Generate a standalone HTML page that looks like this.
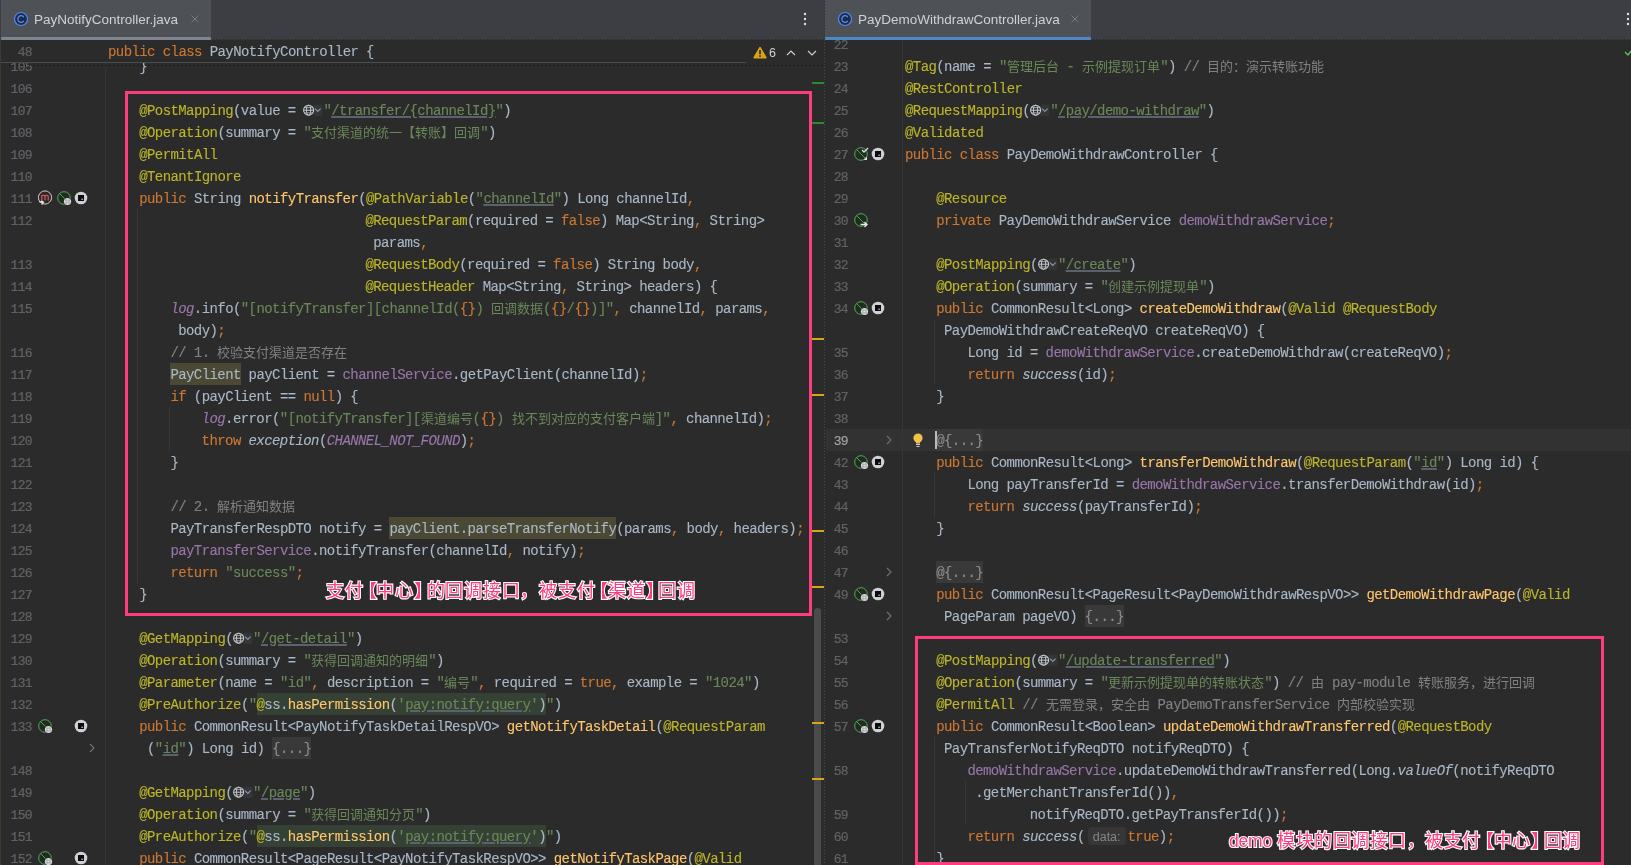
<!DOCTYPE html>
<html lang="zh-CN"><head><meta charset="utf-8"><style>*{margin:0;padding:0;box-sizing:border-box}
html,body{width:1631px;height:865px;overflow:hidden;background:#2b2b2b}
body{position:relative;font-family:"Liberation Mono",monospace}
.ln{position:absolute;width:60px;text-align:right;font-size:13px;letter-spacing:-0.65px;line-height:22px;color:#606366;-webkit-text-stroke-width:0.2px;white-space:pre;padding-top:1px}
.cl{position:absolute;font-size:14px;letter-spacing:-0.58px;-webkit-text-stroke:0.12px;line-height:22px;color:#a9b7c6;white-space:pre}
.cj{font-size:13px;letter-spacing:0;-webkit-text-stroke:0}
.k{color:#cc7832}.a{color:#bbb529}.s{color:#6a8759}.su{color:#6a8759;text-decoration:underline;text-decoration-color:#5a6270;text-decoration-thickness:1.5px;text-underline-offset:1px}
.c{color:#808080}.m{color:#ffc66d}.f{color:#9876aa}.fi{color:#9876aa;font-style:italic}.i{font-style:italic}
.hl{background:#4b4933;padding:4px 0 2px}
.inj{background:#364135;padding:4px 0 2px}
.fold{background:#393939;color:#8c8c8c;padding:4px 0 2px}
.hint{font-family:"Liberation Sans",sans-serif;font-size:12.5px;letter-spacing:0;-webkit-text-stroke:0;color:#858585;background:#363636;padding:3px 5px 1px;margin:0 2px 0 3px;border-radius:4px}
.gl{display:inline-block;width:20px;height:13px;vertical-align:-2px}
.gl svg{display:block}
.ic{position:absolute}
.gs{position:absolute;top:40px;width:1px;height:825px;background:#353535}
.ig{position:absolute;width:1px;background:#383838}
.tabbar{position:absolute;top:0;height:40px;background:#3d3e43;font-family:"Liberation Sans",sans-serif}
.tab{position:absolute;top:0;height:40px;background:#4e5156}
.tab .ul{position:absolute;left:0;right:0;bottom:0;height:3px;border-radius:1px}
.tab .t{position:absolute;top:12px;font-size:13.5px;color:#cfd1d4;white-space:pre}
.tab .x{position:absolute;top:11px;font-size:14px;color:#7f8286}
.box{position:absolute;border:3px solid #ff3c7e}
.ann{position:absolute;font-family:"Liberation Sans",sans-serif;font-weight:normal;color:#ff3c7e;font-size:18px;letter-spacing:0.75px;line-height:24px;white-space:pre;-webkit-text-stroke:2.2px #fff;paint-order:stroke fill}
.ann .bl{display:inline-block;width:12.5px;text-indent:-5px;overflow:visible}
.ann .br{display:inline-block;width:13px;text-indent:0.5px;overflow:visible}
</style></head>
<body><div id="root" style="position:absolute;left:0;top:0;width:1631px;height:865px;overflow:hidden;background:#2b2b2b;will-change:transform">
<div style="position:absolute;left:826px;top:429px;width:805px;height:22px;background:#323232"></div><div class="gs" style="left:105px"></div><div class="gs" style="left:902px"></div><div class="ig" style="left:137px;top:209px;height:374px"></div><div class="ig" style="left:169px;top:407px;height:44px"></div><div class="ig" style="left:934px;top:319px;height:66px"></div><div class="ig" style="left:934px;top:473px;height:44px"></div><div class="ig" style="left:934px;top:737px;height:132px"></div><div class="ig" style="left:965px;top:781px;height:44px"></div><div style="position:absolute;left:0;top:0;width:825px;height:865px;overflow:hidden">
<div class="ln" style="top:56px;left:-28px">105</div>
<div class="cl" style="top:56px;left:139.2px">}</div>
<div class="ln" style="top:78px;left:-28px">106</div>
<div class="ln" style="top:100px;left:-28px">107</div>
<div class="cl" style="top:100px;left:139.2px"><span class="a">@PostMapping</span>(value = <span class="gl"><svg width="20" height="13" viewBox="0 0 20 13"><rect x="10" y="0.5" width="9.5" height="11.5" rx="2" fill="#343537"/><circle cx="5.6" cy="6.2" r="5" fill="none" stroke="#c6c9cd" stroke-width="1.1"/><ellipse cx="5.6" cy="6.2" rx="2.1" ry="5" fill="none" stroke="#c6c9cd" stroke-width="1"/><line x1="0.8" y1="6.2" x2="10.4" y2="6.2" stroke="#c6c9cd" stroke-width="1"/><line x1="1.6" y1="3.6" x2="9.6" y2="3.6" stroke="#c6c9cd" stroke-width="0.7"/><line x1="1.6" y1="8.8" x2="9.6" y2="8.8" stroke="#c6c9cd" stroke-width="0.7"/><path d="M12 4.6 L14.8 7.4 L17.6 4.6" fill="none" stroke="#8d9aab" stroke-width="1.1"/></svg></span><span class="s">"</span><span class="su">/transfer/{channelId}</span><span class="s">"</span>)</div>
<div class="ln" style="top:122px;left:-28px">108</div>
<div class="cl" style="top:122px;left:139.2px"><span class="a">@Operation</span>(summary = <span class="s">"<span class="cj">支付渠道的统一【转账】回调</span>"</span>)</div>
<div class="ln" style="top:144px;left:-28px">109</div>
<div class="cl" style="top:144px;left:139.2px"><span class="a">@PermitAll</span></div>
<div class="ln" style="top:166px;left:-28px">110</div>
<div class="cl" style="top:166px;left:139.2px"><span class="a">@TenantIgnore</span></div>
<div class="ln" style="top:188px;left:-28px">111</div>
<div class="cl" style="top:188px;left:139.2px"><span class="k">public</span> String <span class="m">notifyTransfer</span>(<span class="a">@PathVariable</span>(<span class="s">"</span><span class="su">channelId</span><span class="s">"</span>) Long channelId<span class="k">,</span></div>
<div class="ln" style="top:210px;left:-28px">112</div>
<div class="cl" style="top:210px;left:365.4px"><span class="a">@RequestParam</span>(required = <span class="k">false</span>) Map&lt;String<span class="k">,</span> String&gt;</div>
<div class="cl" style="top:232px;left:373.2px">params<span class="k">,</span></div>
<div class="ln" style="top:254px;left:-28px">113</div>
<div class="cl" style="top:254px;left:365.4px"><span class="a">@RequestBody</span>(required = <span class="k">false</span>) String body<span class="k">,</span></div>
<div class="ln" style="top:276px;left:-28px">114</div>
<div class="cl" style="top:276px;left:365.4px"><span class="a">@RequestHeader</span> Map&lt;String<span class="k">,</span> String&gt; headers) {</div>
<div class="ln" style="top:298px;left:-28px">115</div>
<div class="cl" style="top:298px;left:170.4px"><span class="fi">log</span>.info(<span class="s">"[notifyTransfer][channelId(</span><span class="k">{}</span><span class="s">) <span class="cj">回调数据</span>(</span><span class="k">{}</span><span class="s">/</span><span class="k">{}</span><span class="s">)]"</span><span class="k">,</span> channelId<span class="k">,</span> params<span class="k">,</span></div>
<div class="cl" style="top:320px;left:178.2px">body)<span class="k">;</span></div>
<div class="ln" style="top:342px;left:-28px">116</div>
<div class="cl" style="top:342px;left:170.4px"><span class="c">// 1. <span class="cj">校验支付渠道是否存在</span></span></div>
<div class="ln" style="top:364px;left:-28px">117</div>
<div class="cl" style="top:364px;left:170.4px"><span class="hl">PayClient</span> payClient = <span class="f">channelService</span>.getPayClient(channelId)<span class="k">;</span></div>
<div class="ln" style="top:386px;left:-28px">118</div>
<div class="cl" style="top:386px;left:170.4px"><span class="k">if</span> (payClient == <span class="k">null</span>) {</div>
<div class="ln" style="top:408px;left:-28px">119</div>
<div class="cl" style="top:408px;left:201.6px"><span class="fi">log</span>.error(<span class="s">"[notifyTransfer][<span class="cj">渠道编号</span>(</span><span class="k">{}</span><span class="s">) <span class="cj">找不到对应的支付客户端</span>]"</span><span class="k">,</span> channelId)<span class="k">;</span></div>
<div class="ln" style="top:430px;left:-28px">120</div>
<div class="cl" style="top:430px;left:201.6px"><span class="k">throw</span> <span class="i">exception</span>(<span class="fi">CHANNEL_NOT_FOUND</span>)<span class="k">;</span></div>
<div class="ln" style="top:452px;left:-28px">121</div>
<div class="cl" style="top:452px;left:170.4px">}</div>
<div class="ln" style="top:474px;left:-28px">122</div>
<div class="ln" style="top:496px;left:-28px">123</div>
<div class="cl" style="top:496px;left:170.4px"><span class="c">// 2. <span class="cj">解析通知数据</span></span></div>
<div class="ln" style="top:518px;left:-28px">124</div>
<div class="cl" style="top:518px;left:170.4px">PayTransferRespDTO notify = <span class="hl">payClient.parseTransferNotify</span>(params<span class="k">,</span> body<span class="k">,</span> headers)<span class="k">;</span></div>
<div class="ln" style="top:540px;left:-28px">125</div>
<div class="cl" style="top:540px;left:170.4px"><span class="f">payTransferService</span>.notifyTransfer(channelId<span class="k">,</span> notify)<span class="k">;</span></div>
<div class="ln" style="top:562px;left:-28px">126</div>
<div class="cl" style="top:562px;left:170.4px"><span class="k">return</span> <span class="s">"success"</span><span class="k">;</span></div>
<div class="ln" style="top:584px;left:-28px">127</div>
<div class="cl" style="top:584px;left:139.2px">}</div>
<div class="ln" style="top:606px;left:-28px">128</div>
<div class="ln" style="top:628px;left:-28px">129</div>
<div class="cl" style="top:628px;left:139.2px"><span class="a">@GetMapping</span>(<span class="gl"><svg width="20" height="13" viewBox="0 0 20 13"><rect x="10" y="0.5" width="9.5" height="11.5" rx="2" fill="#343537"/><circle cx="5.6" cy="6.2" r="5" fill="none" stroke="#c6c9cd" stroke-width="1.1"/><ellipse cx="5.6" cy="6.2" rx="2.1" ry="5" fill="none" stroke="#c6c9cd" stroke-width="1"/><line x1="0.8" y1="6.2" x2="10.4" y2="6.2" stroke="#c6c9cd" stroke-width="1"/><line x1="1.6" y1="3.6" x2="9.6" y2="3.6" stroke="#c6c9cd" stroke-width="0.7"/><line x1="1.6" y1="8.8" x2="9.6" y2="8.8" stroke="#c6c9cd" stroke-width="0.7"/><path d="M12 4.6 L14.8 7.4 L17.6 4.6" fill="none" stroke="#8d9aab" stroke-width="1.1"/></svg></span><span class="s">"</span><span class="su">/get-detail</span><span class="s">"</span>)</div>
<div class="ln" style="top:650px;left:-28px">130</div>
<div class="cl" style="top:650px;left:139.2px"><span class="a">@Operation</span>(summary = <span class="s">"<span class="cj">获得回调通知的明细</span>"</span>)</div>
<div class="ln" style="top:672px;left:-28px">131</div>
<div class="cl" style="top:672px;left:139.2px"><span class="a">@Parameter</span>(name = <span class="s">"id"</span><span class="k">,</span> description = <span class="s">"<span class="cj">编号</span>"</span><span class="k">,</span> required = <span class="k">true</span><span class="k">,</span> example = <span class="s">"1024"</span>)</div>
<div class="ln" style="top:694px;left:-28px">132</div>
<div class="cl" style="top:694px;left:139.2px"><span class="a">@PreAuthorize</span>(<span class="s">"</span><span class="inj"><span class="a">@</span>ss.<span class="m">hasPermission</span>(<span class="s">'</span><span class="su">pay:notify:query</span><span class="s">'</span>)</span><span class="s">"</span>)</div>
<div class="ln" style="top:716px;left:-28px">133</div>
<div class="cl" style="top:716px;left:139.2px"><span class="k">public</span> CommonResult&lt;PayNotifyTaskDetailRespVO&gt; <span class="m">getNotifyTaskDetail</span>(<span class="a">@RequestParam</span></div>
<div class="cl" style="top:738px;left:147.0px">(<span class="s">"</span><span class="su">id</span><span class="s">"</span>) Long id) <span class="fold">{...}</span></div>
<div class="ln" style="top:760px;left:-28px">148</div>
<div class="ln" style="top:782px;left:-28px">149</div>
<div class="cl" style="top:782px;left:139.2px"><span class="a">@GetMapping</span>(<span class="gl"><svg width="20" height="13" viewBox="0 0 20 13"><rect x="10" y="0.5" width="9.5" height="11.5" rx="2" fill="#343537"/><circle cx="5.6" cy="6.2" r="5" fill="none" stroke="#c6c9cd" stroke-width="1.1"/><ellipse cx="5.6" cy="6.2" rx="2.1" ry="5" fill="none" stroke="#c6c9cd" stroke-width="1"/><line x1="0.8" y1="6.2" x2="10.4" y2="6.2" stroke="#c6c9cd" stroke-width="1"/><line x1="1.6" y1="3.6" x2="9.6" y2="3.6" stroke="#c6c9cd" stroke-width="0.7"/><line x1="1.6" y1="8.8" x2="9.6" y2="8.8" stroke="#c6c9cd" stroke-width="0.7"/><path d="M12 4.6 L14.8 7.4 L17.6 4.6" fill="none" stroke="#8d9aab" stroke-width="1.1"/></svg></span><span class="s">"</span><span class="su">/page</span><span class="s">"</span>)</div>
<div class="ln" style="top:804px;left:-28px">150</div>
<div class="cl" style="top:804px;left:139.2px"><span class="a">@Operation</span>(summary = <span class="s">"<span class="cj">获得回调通知分页</span>"</span>)</div>
<div class="ln" style="top:826px;left:-28px">151</div>
<div class="cl" style="top:826px;left:139.2px"><span class="a">@PreAuthorize</span>(<span class="s">"</span><span class="inj"><span class="a">@</span>ss.<span class="m">hasPermission</span>(<span class="s">'</span><span class="su">pay:notify:query</span><span class="s">'</span>)</span><span class="s">"</span>)</div>
<div class="ln" style="top:848px;left:-28px">152</div>
<div class="cl" style="top:848px;left:139.2px"><span class="k">public</span> CommonResult&lt;PageResult&lt;PayNotifyTaskRespVO&gt;&gt; <span class="m">getNotifyTaskPage</span>(<span class="a">@Valid</span></div>
</div>
<div style="position:absolute;left:826px;top:0;width:805px;height:865px;overflow:hidden">
<div style="position:absolute;left:-826px;top:0;width:1631px;height:865px">
<div class="ln" style="top:34px;left:788px">22</div>
<div class="ln" style="top:56px;left:788px">23</div>
<div class="cl" style="top:56px;left:905.0px"><span class="a">@Tag</span>(name = <span class="s">"<span class="cj">管理后台</span> - <span class="cj">示例提现订单</span>"</span>) <span class="c">// <span class="cj">目的：演示转账功能</span></span></div>
<div class="ln" style="top:78px;left:788px">24</div>
<div class="cl" style="top:78px;left:905.0px"><span class="a">@RestController</span></div>
<div class="ln" style="top:100px;left:788px">25</div>
<div class="cl" style="top:100px;left:905.0px"><span class="a">@RequestMapping</span>(<span class="gl"><svg width="20" height="13" viewBox="0 0 20 13"><rect x="10" y="0.5" width="9.5" height="11.5" rx="2" fill="#343537"/><circle cx="5.6" cy="6.2" r="5" fill="none" stroke="#c6c9cd" stroke-width="1.1"/><ellipse cx="5.6" cy="6.2" rx="2.1" ry="5" fill="none" stroke="#c6c9cd" stroke-width="1"/><line x1="0.8" y1="6.2" x2="10.4" y2="6.2" stroke="#c6c9cd" stroke-width="1"/><line x1="1.6" y1="3.6" x2="9.6" y2="3.6" stroke="#c6c9cd" stroke-width="0.7"/><line x1="1.6" y1="8.8" x2="9.6" y2="8.8" stroke="#c6c9cd" stroke-width="0.7"/><path d="M12 4.6 L14.8 7.4 L17.6 4.6" fill="none" stroke="#8d9aab" stroke-width="1.1"/></svg></span><span class="s">"</span><span class="su">/pay/demo-withdraw</span><span class="s">"</span>)</div>
<div class="ln" style="top:122px;left:788px">26</div>
<div class="cl" style="top:122px;left:905.0px"><span class="a">@Validated</span></div>
<div class="ln" style="top:144px;left:788px">27</div>
<div class="cl" style="top:144px;left:905.0px"><span class="k">public class</span> PayDemoWithdrawController {</div>
<div class="ln" style="top:166px;left:788px">28</div>
<div class="ln" style="top:188px;left:788px">29</div>
<div class="cl" style="top:188px;left:936.2px"><span class="a">@Resource</span></div>
<div class="ln" style="top:210px;left:788px">30</div>
<div class="cl" style="top:210px;left:936.2px"><span class="k">private</span> PayDemoWithdrawService <span class="f">demoWithdrawService</span><span class="k">;</span></div>
<div class="ln" style="top:232px;left:788px">31</div>
<div class="ln" style="top:254px;left:788px">32</div>
<div class="cl" style="top:254px;left:936.2px"><span class="a">@PostMapping</span>(<span class="gl"><svg width="20" height="13" viewBox="0 0 20 13"><rect x="10" y="0.5" width="9.5" height="11.5" rx="2" fill="#343537"/><circle cx="5.6" cy="6.2" r="5" fill="none" stroke="#c6c9cd" stroke-width="1.1"/><ellipse cx="5.6" cy="6.2" rx="2.1" ry="5" fill="none" stroke="#c6c9cd" stroke-width="1"/><line x1="0.8" y1="6.2" x2="10.4" y2="6.2" stroke="#c6c9cd" stroke-width="1"/><line x1="1.6" y1="3.6" x2="9.6" y2="3.6" stroke="#c6c9cd" stroke-width="0.7"/><line x1="1.6" y1="8.8" x2="9.6" y2="8.8" stroke="#c6c9cd" stroke-width="0.7"/><path d="M12 4.6 L14.8 7.4 L17.6 4.6" fill="none" stroke="#8d9aab" stroke-width="1.1"/></svg></span><span class="s">"</span><span class="su">/create</span><span class="s">"</span>)</div>
<div class="ln" style="top:276px;left:788px">33</div>
<div class="cl" style="top:276px;left:936.2px"><span class="a">@Operation</span>(summary = <span class="s">"<span class="cj">创建示例提现单</span>"</span>)</div>
<div class="ln" style="top:298px;left:788px">34</div>
<div class="cl" style="top:298px;left:936.2px"><span class="k">public</span> CommonResult&lt;Long&gt; <span class="m">createDemoWithdraw</span>(<span class="a">@Valid</span> <span class="a">@RequestBody</span></div>
<div class="cl" style="top:320px;left:944.0px">PayDemoWithdrawCreateReqVO createReqVO) {</div>
<div class="ln" style="top:342px;left:788px">35</div>
<div class="cl" style="top:342px;left:967.4px">Long id = <span class="f">demoWithdrawService</span>.createDemoWithdraw(createReqVO)<span class="k">;</span></div>
<div class="ln" style="top:364px;left:788px">36</div>
<div class="cl" style="top:364px;left:967.4px"><span class="k">return</span> <span class="i">success</span>(id)<span class="k">;</span></div>
<div class="ln" style="top:386px;left:788px">37</div>
<div class="cl" style="top:386px;left:936.2px">}</div>
<div class="ln" style="top:408px;left:788px">38</div>
<div class="cl" style="top:430px;left:936.2px"><span class="fold">@{...}</span></div>
<div class="ln" style="top:452px;left:788px">42</div>
<div class="cl" style="top:452px;left:936.2px"><span class="k">public</span> CommonResult&lt;Long&gt; <span class="m">transferDemoWithdraw</span>(<span class="a">@RequestParam</span>(<span class="s">"</span><span class="su">id</span><span class="s">"</span>) Long id) {</div>
<div class="ln" style="top:474px;left:788px">43</div>
<div class="cl" style="top:474px;left:967.4px">Long payTransferId = <span class="f">demoWithdrawService</span>.transferDemoWithdraw(id)<span class="k">;</span></div>
<div class="ln" style="top:496px;left:788px">44</div>
<div class="cl" style="top:496px;left:967.4px"><span class="k">return</span> <span class="i">success</span>(payTransferId)<span class="k">;</span></div>
<div class="ln" style="top:518px;left:788px">45</div>
<div class="cl" style="top:518px;left:936.2px">}</div>
<div class="ln" style="top:540px;left:788px">46</div>
<div class="ln" style="top:562px;left:788px">47</div>
<div class="cl" style="top:562px;left:936.2px"><span class="fold">@{...}</span></div>
<div class="ln" style="top:584px;left:788px">49</div>
<div class="cl" style="top:584px;left:936.2px"><span class="k">public</span> CommonResult&lt;PageResult&lt;PayDemoWithdrawRespVO&gt;&gt; <span class="m">getDemoWithdrawPage</span>(<span class="a">@Valid</span></div>
<div class="cl" style="top:606px;left:944.0px">PageParam pageVO) <span class="fold">{...}</span></div>
<div class="ln" style="top:628px;left:788px">53</div>
<div class="ln" style="top:650px;left:788px">54</div>
<div class="cl" style="top:650px;left:936.2px"><span class="a">@PostMapping</span>(<span class="gl"><svg width="20" height="13" viewBox="0 0 20 13"><rect x="10" y="0.5" width="9.5" height="11.5" rx="2" fill="#343537"/><circle cx="5.6" cy="6.2" r="5" fill="none" stroke="#c6c9cd" stroke-width="1.1"/><ellipse cx="5.6" cy="6.2" rx="2.1" ry="5" fill="none" stroke="#c6c9cd" stroke-width="1"/><line x1="0.8" y1="6.2" x2="10.4" y2="6.2" stroke="#c6c9cd" stroke-width="1"/><line x1="1.6" y1="3.6" x2="9.6" y2="3.6" stroke="#c6c9cd" stroke-width="0.7"/><line x1="1.6" y1="8.8" x2="9.6" y2="8.8" stroke="#c6c9cd" stroke-width="0.7"/><path d="M12 4.6 L14.8 7.4 L17.6 4.6" fill="none" stroke="#8d9aab" stroke-width="1.1"/></svg></span><span class="s">"</span><span class="su">/update-transferred</span><span class="s">"</span>)</div>
<div class="ln" style="top:672px;left:788px">55</div>
<div class="cl" style="top:672px;left:936.2px"><span class="a">@Operation</span>(summary = <span class="s">"<span class="cj">更新示例提现单的转账状态</span>"</span>) <span class="c">// <span class="cj">由</span> pay-module <span class="cj">转账服务，进行回调</span></span></div>
<div class="ln" style="top:694px;left:788px">56</div>
<div class="cl" style="top:694px;left:936.2px"><span class="a">@PermitAll</span> <span class="c">// <span class="cj">无需登录，安全由</span> PayDemoTransferService <span class="cj">内部校验实现</span></span></div>
<div class="ln" style="top:716px;left:788px">57</div>
<div class="cl" style="top:716px;left:936.2px"><span class="k">public</span> CommonResult&lt;Boolean&gt; <span class="m">updateDemoWithdrawTransferred</span>(<span class="a">@RequestBody</span></div>
<div class="cl" style="top:738px;left:944.0px">PayTransferNotifyReqDTO notifyReqDTO) {</div>
<div class="ln" style="top:760px;left:788px">58</div>
<div class="cl" style="top:760px;left:967.4px"><span class="f">demoWithdrawService</span>.updateDemoWithdrawTransferred(Long.<span class="i">valueOf</span>(notifyReqDTO</div>
<div class="cl" style="top:782px;left:975.2px">.getMerchantTransferId())<span class="k">,</span></div>
<div class="ln" style="top:804px;left:788px">59</div>
<div class="cl" style="top:804px;left:1029.8px">notifyReqDTO.getPayTransferId())<span class="k">;</span></div>
<div class="ln" style="top:826px;left:788px">60</div>
<div class="cl" style="top:826px;left:967.4px"><span class="k">return</span> <span class="i">success</span>(<span class="hint">data:</span><span class="k">true</span>)<span class="k">;</span></div>
<div class="ln" style="top:848px;left:788px">61</div>
<div class="cl" style="top:848px;left:936.2px">}</div>
</div></div>
<svg class="ic" style="left:36px;top:189px" width="18" height="18" viewBox="0 0 18 18"><circle cx="9" cy="8.5" r="6.6" fill="#2f2626" stroke="#cfd1d4" stroke-width="1"/><path d="M5.8 11.6 V6.2 M5.8 7.2 Q5.8 6.2 7 6.2 H7.8 Q9 6.2 9 7.4 V11.6 M9 7.4 Q9 6.2 10.2 6.2 H11 Q12.2 6.2 12.2 7.4 V11.6" fill="none" stroke="#e8605e" stroke-width="1.1"/><path d="M3.2 12.6 L6.8 13.4 M5.6 15.6 L7.6 13.2 L5.2 11.8" fill="none" stroke="#e6e8eb" stroke-width="1.1"/></svg>
<svg class="ic" style="left:56px;top:190px" width="18" height="18" viewBox="0 0 18 18"><circle cx="8" cy="8" r="6.3" fill="#1f2d1f" stroke="#56a95a" stroke-width="1"/><line x1="3.6" y1="3.6" x2="12.4" y2="12.4" stroke="#56a95a" stroke-width="0.9"/><circle cx="11.5" cy="11.5" r="4.1" fill="#2b2b2b"/><circle cx="11.5" cy="11.5" r="3.6" fill="#d6d8db"/><path d="M10 9 V14 M13 9 V14 M9 10.3 H14 M9 12.7 H14" stroke="#a2a5a9" stroke-width="0.7"/></svg>
<svg class="ic" style="left:73px;top:190px" width="16" height="16" viewBox="0 0 16 16"><circle cx="8" cy="8" r="6.3" fill="#cdd0d4"/><rect x="5" y="5" width="6" height="6" fill="#0b0b0b"/><rect x="8.2" y="8.7" width="2" height="1" fill="#cdd0d4"/></svg>
<svg class="ic" style="left:37px;top:718px" width="18" height="18" viewBox="0 0 18 18"><circle cx="8" cy="8" r="6.3" fill="#1f2d1f" stroke="#56a95a" stroke-width="1"/><line x1="3.6" y1="3.6" x2="12.4" y2="12.4" stroke="#56a95a" stroke-width="0.9"/><circle cx="11.5" cy="11.5" r="4.1" fill="#2b2b2b"/><circle cx="11.5" cy="11.5" r="3.6" fill="#d6d8db"/><path d="M10 9 V14 M13 9 V14 M9 10.3 H14 M9 12.7 H14" stroke="#a2a5a9" stroke-width="0.7"/></svg>
<svg class="ic" style="left:73px;top:718px" width="16" height="16" viewBox="0 0 16 16"><circle cx="8" cy="8" r="6.3" fill="#cdd0d4"/><rect x="5" y="5" width="6" height="6" fill="#0b0b0b"/><rect x="8.2" y="8.7" width="2" height="1" fill="#cdd0d4"/></svg>
<svg class="ic" style="left:87px;top:742px" width="10" height="12" viewBox="0 0 10 12"><path d="M3 2 L7 6 L3 10" fill="none" stroke="#6f7377" stroke-width="1.1"/></svg>
<svg class="ic" style="left:37px;top:850px" width="18" height="18" viewBox="0 0 18 18"><circle cx="8" cy="8" r="6.3" fill="#1f2d1f" stroke="#56a95a" stroke-width="1"/><line x1="3.6" y1="3.6" x2="12.4" y2="12.4" stroke="#56a95a" stroke-width="0.9"/><circle cx="11.5" cy="11.5" r="4.1" fill="#2b2b2b"/><circle cx="11.5" cy="11.5" r="3.6" fill="#d6d8db"/><path d="M10 9 V14 M13 9 V14 M9 10.3 H14 M9 12.7 H14" stroke="#a2a5a9" stroke-width="0.7"/></svg>
<svg class="ic" style="left:73px;top:850px" width="16" height="16" viewBox="0 0 16 16"><circle cx="8" cy="8" r="6.3" fill="#cdd0d4"/><rect x="5" y="5" width="6" height="6" fill="#0b0b0b"/><rect x="8.2" y="8.7" width="2" height="1" fill="#cdd0d4"/></svg>
<svg class="ic" style="left:853px;top:146px" width="18" height="18" viewBox="0 0 18 18"><circle cx="8" cy="8" r="6.3" fill="#1f2d1f" stroke="#56a95a" stroke-width="1"/><line x1="3.6" y1="3.6" x2="12.4" y2="12.4" stroke="#56a95a" stroke-width="0.9"/><path d="M9 4 L11 6 L15 2" fill="none" stroke="#dfe1e5" stroke-width="1.3"/><path d="M14 10.5 V14 H10.5 Z" fill="#dfe1e5"/></svg>
<svg class="ic" style="left:870px;top:146px" width="16" height="16" viewBox="0 0 16 16"><circle cx="8" cy="8" r="6.3" fill="#cdd0d4"/><rect x="5" y="5" width="6" height="6" fill="#0b0b0b"/><rect x="8.2" y="8.7" width="2" height="1" fill="#cdd0d4"/></svg>
<svg class="ic" style="left:853px;top:212px" width="18" height="18" viewBox="0 0 18 18"><circle cx="8" cy="8" r="6.3" fill="#1f2d1f" stroke="#56a95a" stroke-width="1"/><line x1="3.6" y1="3.6" x2="12.4" y2="12.4" stroke="#56a95a" stroke-width="0.9"/><path d="M7.5 12.5 H14 M11.5 10 L14 12.5 L11.5 15" fill="none" stroke="#e6e8eb" stroke-width="1.3"/></svg>
<svg class="ic" style="left:853px;top:300px" width="18" height="18" viewBox="0 0 18 18"><circle cx="8" cy="8" r="6.3" fill="#1f2d1f" stroke="#56a95a" stroke-width="1"/><line x1="3.6" y1="3.6" x2="12.4" y2="12.4" stroke="#56a95a" stroke-width="0.9"/><circle cx="11.5" cy="11.5" r="4.1" fill="#2b2b2b"/><circle cx="11.5" cy="11.5" r="3.6" fill="#d6d8db"/><path d="M10 9 V14 M13 9 V14 M9 10.3 H14 M9 12.7 H14" stroke="#a2a5a9" stroke-width="0.7"/></svg>
<svg class="ic" style="left:870px;top:300px" width="16" height="16" viewBox="0 0 16 16"><circle cx="8" cy="8" r="6.3" fill="#cdd0d4"/><rect x="5" y="5" width="6" height="6" fill="#0b0b0b"/><rect x="8.2" y="8.7" width="2" height="1" fill="#cdd0d4"/></svg>
<svg class="ic" style="left:884px;top:434px" width="10" height="12" viewBox="0 0 10 12"><path d="M3 2 L7 6 L3 10" fill="none" stroke="#6f7377" stroke-width="1.1"/></svg>
<svg class="ic" style="left:853px;top:454px" width="18" height="18" viewBox="0 0 18 18"><circle cx="8" cy="8" r="6.3" fill="#1f2d1f" stroke="#56a95a" stroke-width="1"/><line x1="3.6" y1="3.6" x2="12.4" y2="12.4" stroke="#56a95a" stroke-width="0.9"/><circle cx="11.5" cy="11.5" r="4.1" fill="#2b2b2b"/><circle cx="11.5" cy="11.5" r="3.6" fill="#d6d8db"/><path d="M10 9 V14 M13 9 V14 M9 10.3 H14 M9 12.7 H14" stroke="#a2a5a9" stroke-width="0.7"/></svg>
<svg class="ic" style="left:870px;top:454px" width="16" height="16" viewBox="0 0 16 16"><circle cx="8" cy="8" r="6.3" fill="#cdd0d4"/><rect x="5" y="5" width="6" height="6" fill="#0b0b0b"/><rect x="8.2" y="8.7" width="2" height="1" fill="#cdd0d4"/></svg>
<svg class="ic" style="left:884px;top:566px" width="10" height="12" viewBox="0 0 10 12"><path d="M3 2 L7 6 L3 10" fill="none" stroke="#6f7377" stroke-width="1.1"/></svg>
<svg class="ic" style="left:853px;top:586px" width="18" height="18" viewBox="0 0 18 18"><circle cx="8" cy="8" r="6.3" fill="#1f2d1f" stroke="#56a95a" stroke-width="1"/><line x1="3.6" y1="3.6" x2="12.4" y2="12.4" stroke="#56a95a" stroke-width="0.9"/><circle cx="11.5" cy="11.5" r="4.1" fill="#2b2b2b"/><circle cx="11.5" cy="11.5" r="3.6" fill="#d6d8db"/><path d="M10 9 V14 M13 9 V14 M9 10.3 H14 M9 12.7 H14" stroke="#a2a5a9" stroke-width="0.7"/></svg>
<svg class="ic" style="left:870px;top:586px" width="16" height="16" viewBox="0 0 16 16"><circle cx="8" cy="8" r="6.3" fill="#cdd0d4"/><rect x="5" y="5" width="6" height="6" fill="#0b0b0b"/><rect x="8.2" y="8.7" width="2" height="1" fill="#cdd0d4"/></svg>
<svg class="ic" style="left:884px;top:610px" width="10" height="12" viewBox="0 0 10 12"><path d="M3 2 L7 6 L3 10" fill="none" stroke="#6f7377" stroke-width="1.1"/></svg>
<svg class="ic" style="left:853px;top:718px" width="18" height="18" viewBox="0 0 18 18"><circle cx="8" cy="8" r="6.3" fill="#1f2d1f" stroke="#56a95a" stroke-width="1"/><line x1="3.6" y1="3.6" x2="12.4" y2="12.4" stroke="#56a95a" stroke-width="0.9"/><circle cx="11.5" cy="11.5" r="4.1" fill="#2b2b2b"/><circle cx="11.5" cy="11.5" r="3.6" fill="#d6d8db"/><path d="M10 9 V14 M13 9 V14 M9 10.3 H14 M9 12.7 H14" stroke="#a2a5a9" stroke-width="0.7"/></svg>
<svg class="ic" style="left:870px;top:718px" width="16" height="16" viewBox="0 0 16 16"><circle cx="8" cy="8" r="6.3" fill="#cdd0d4"/><rect x="5" y="5" width="6" height="6" fill="#0b0b0b"/><rect x="8.2" y="8.7" width="2" height="1" fill="#cdd0d4"/></svg><div style="position:absolute;left:814px;top:608px;width:7px;height:270px;border-radius:4px;background:#4a4b4c"></div><div style="position:absolute;left:812px;top:82px;width:12px;height:2px;background:#2a8a2a"></div><div style="position:absolute;left:812px;top:122px;width:12px;height:2px;background:#2a8a2a"></div><div style="position:absolute;left:812px;top:338px;width:12px;height:2px;background:#d9a31a"></div><div style="position:absolute;left:812px;top:394px;width:12px;height:2px;background:#d9a31a"></div><div style="position:absolute;left:812px;top:530px;width:12px;height:2px;background:#d9a31a"></div><div style="position:absolute;left:812px;top:586px;width:12px;height:2px;background:#d9a31a"></div><div style="position:absolute;left:812px;top:722px;width:12px;height:2px;background:#d9a31a"></div><div style="position:absolute;left:812px;top:778px;width:12px;height:2px;background:#d9a31a"></div><div style="position:absolute;left:824px;top:40px;width:1px;height:825px;background:repeating-linear-gradient(to bottom,#4b4d3a 0 1px,transparent 1px 3px)"></div><div style="position:absolute;left:9px;top:65px;width:815px;height:1px;background:repeating-linear-gradient(to right,#111 0 1px,transparent 1px 4px)"></div><div style="position:absolute;left:0;top:40px;width:825px;height:23px;background:#2b2b2b"></div>
<div style="position:absolute;left:0;top:62px;width:746px;height:1px;background:#4a4c4e"></div>
<div class="ln" style="top:41px;left:-28px">48</div>
<div class="cl" style="top:41px;left:108px"><span class="k">public class</span> PayNotifyController {</div>
<svg class="ic" style="left:752px;top:45px" width="16" height="15" viewBox="0 0 16 15"><path d="M8 2.6 L13.9 12.6 H2.1 Z" fill="#d8a21a" stroke="#d8a21a" stroke-width="1.6" stroke-linejoin="round"/><rect x="7.2" y="5" width="1.6" height="4.3" fill="#2b2b2b"/><rect x="7.2" y="10.3" width="1.6" height="1.6" fill="#2b2b2b"/></svg>
<div style="position:absolute;left:769px;top:46px;font-family:'Liberation Sans',sans-serif;font-size:12.5px;color:#cfd1d4">6</div>
<svg class="ic" style="left:785px;top:48px" width="12" height="10" viewBox="0 0 12 10"><path d="M2 7 L6 3 L10 7" fill="none" stroke="#cfd1d4" stroke-width="1.1"/></svg>
<svg class="ic" style="left:806px;top:48px" width="12" height="10" viewBox="0 0 12 10"><path d="M2 3 L6 7 L10 3" fill="none" stroke="#cfd1d4" stroke-width="1.1"/></svg>
<div class="tabbar" style="left:0;width:825px">
  <div class="tab" style="left:1px;width:210px"><div class="ul" style="background:#7d8590"></div>
  <div class="t" style="left:33px">PayNotifyController.java</div>
  <svg class="ic" style="left:190px;top:15px" width="8" height="8" viewBox="0 0 8 8"><path d="M0.5 0.5 L7.5 7.5 M7.5 0.5 L0.5 7.5" stroke="#737d8b" stroke-width="1"/></svg></div>
  <svg class="ic" style="left:803px;top:12px" width="4" height="14" viewBox="0 0 4 14"><circle cx="2" cy="2" r="1.2" fill="#dfe1e5"/><circle cx="2" cy="7" r="1.2" fill="#dfe1e5"/><circle cx="2" cy="12" r="1.2" fill="#dfe1e5"/></svg>
</div>

<div class="tabbar" style="left:825px;width:806px">
  <div class="tab" style="left:0px;width:266px"><div class="ul" style="background:#4a88c7"></div>
  <div class="t" style="left:33px">PayDemoWithdrawController.java</div>
  <svg class="ic" style="left:246px;top:15px" width="8" height="8" viewBox="0 0 8 8"><path d="M0.5 0.5 L7.5 7.5 M7.5 0.5 L0.5 7.5" stroke="#737d8b" stroke-width="1"/></svg></div>
  <svg class="ic" style="left:801px;top:12px" width="4" height="14" viewBox="0 0 4 14"><circle cx="2" cy="2" r="1.2" fill="#dfe1e5"/><circle cx="2" cy="7" r="1.2" fill="#dfe1e5"/><circle cx="2" cy="12" r="1.2" fill="#dfe1e5"/></svg>
</div>
<div style="position:absolute;left:824px;top:0;width:1px;height:40px;background:repeating-linear-gradient(to bottom,#45473a 0 1px,#34363a 1px 3px)"></div>
<div class="ln" style="top:430px;left:788px;color:#a4a3a3">39</div>
<div style="position:absolute;left:935px;top:431px;width:2px;height:18px;background:#bbbbbb"></div>
<svg class="ic" style="left:911px;top:432px" width="14" height="16" viewBox="0 0 14 16"><circle cx="7" cy="6" r="4.6" fill="#f0c24a"/><rect x="5" y="9" width="4" height="2.5" fill="#f0c24a"/><rect x="5" y="12" width="4" height="1" fill="#cfd1d4"/><rect x="5.5" y="14" width="3" height="1" fill="#cfd1d4"/></svg>
<div style="position:absolute;left:824px;top:40px;width:1px;height:825px;background:repeating-linear-gradient(to bottom,#4b4d3a 0 1px,transparent 1px 3px)"></div>
<div style="position:absolute;left:212px;top:39px;width:613px;height:1px;background:repeating-linear-gradient(to right,#42443a 0 1px,#2e2f30 1px 3px)"></div><div style="position:absolute;left:1092px;top:39px;width:539px;height:1px;background:repeating-linear-gradient(to right,#42443a 0 1px,#2e2f30 1px 3px)"></div>
<div style="position:absolute;left:0;top:40px;width:1px;height:825px;background:repeating-linear-gradient(to bottom,#454a35 0 1px,#303030 1px 2px)"></div>
<svg class="ic" style="left:1624px;top:48px" width="7" height="9" viewBox="0 0 7 9"><path d="M1 4 L4 7 L8 2" fill="none" stroke="#5fb760" stroke-width="1.5"/></svg>
<svg class="ic" style="left:13px;top:11px" width="16" height="16" viewBox="0 0 16 16"><circle cx="8" cy="8" r="6.5" fill="#1e2a47" stroke="#548af7" stroke-width="1.2"/><path d="M10.7 6.1 A3.2 3.4 0 1 0 10.7 9.9" fill="none" stroke="#5a8ef5" stroke-width="1.2"/></svg><svg class="ic" style="left:837px;top:11px" width="16" height="16" viewBox="0 0 16 16"><circle cx="8" cy="8" r="6.5" fill="#1e2a47" stroke="#548af7" stroke-width="1.2"/><path d="M10.7 6.1 A3.2 3.4 0 1 0 10.7 9.9" fill="none" stroke="#5a8ef5" stroke-width="1.2"/></svg><div class="box" style="left:125px;top:91px;width:687px;height:525px"></div>
<div class="box" style="left:915px;top:636px;width:689px;height:229px"></div>
<div class="ann" id="ann1" style="left:326px;top:579px">支付<span class="bl">【</span>中心<span class="br">】</span>的回调接口，被支付<span class="bl">【</span>渠道<span class="br">】</span>回调</div>
<div class="ann" id="ann2" style="left:1229px;top:829px"><span style="font-size:17.5px;letter-spacing:-0.2px;margin-right:5px">demo</span><span style="letter-spacing:0.55px">模块的回调接口，被支付<span class="bl">【</span>中心<span class="br">】</span>回调</span></div>
</div></body></html>
